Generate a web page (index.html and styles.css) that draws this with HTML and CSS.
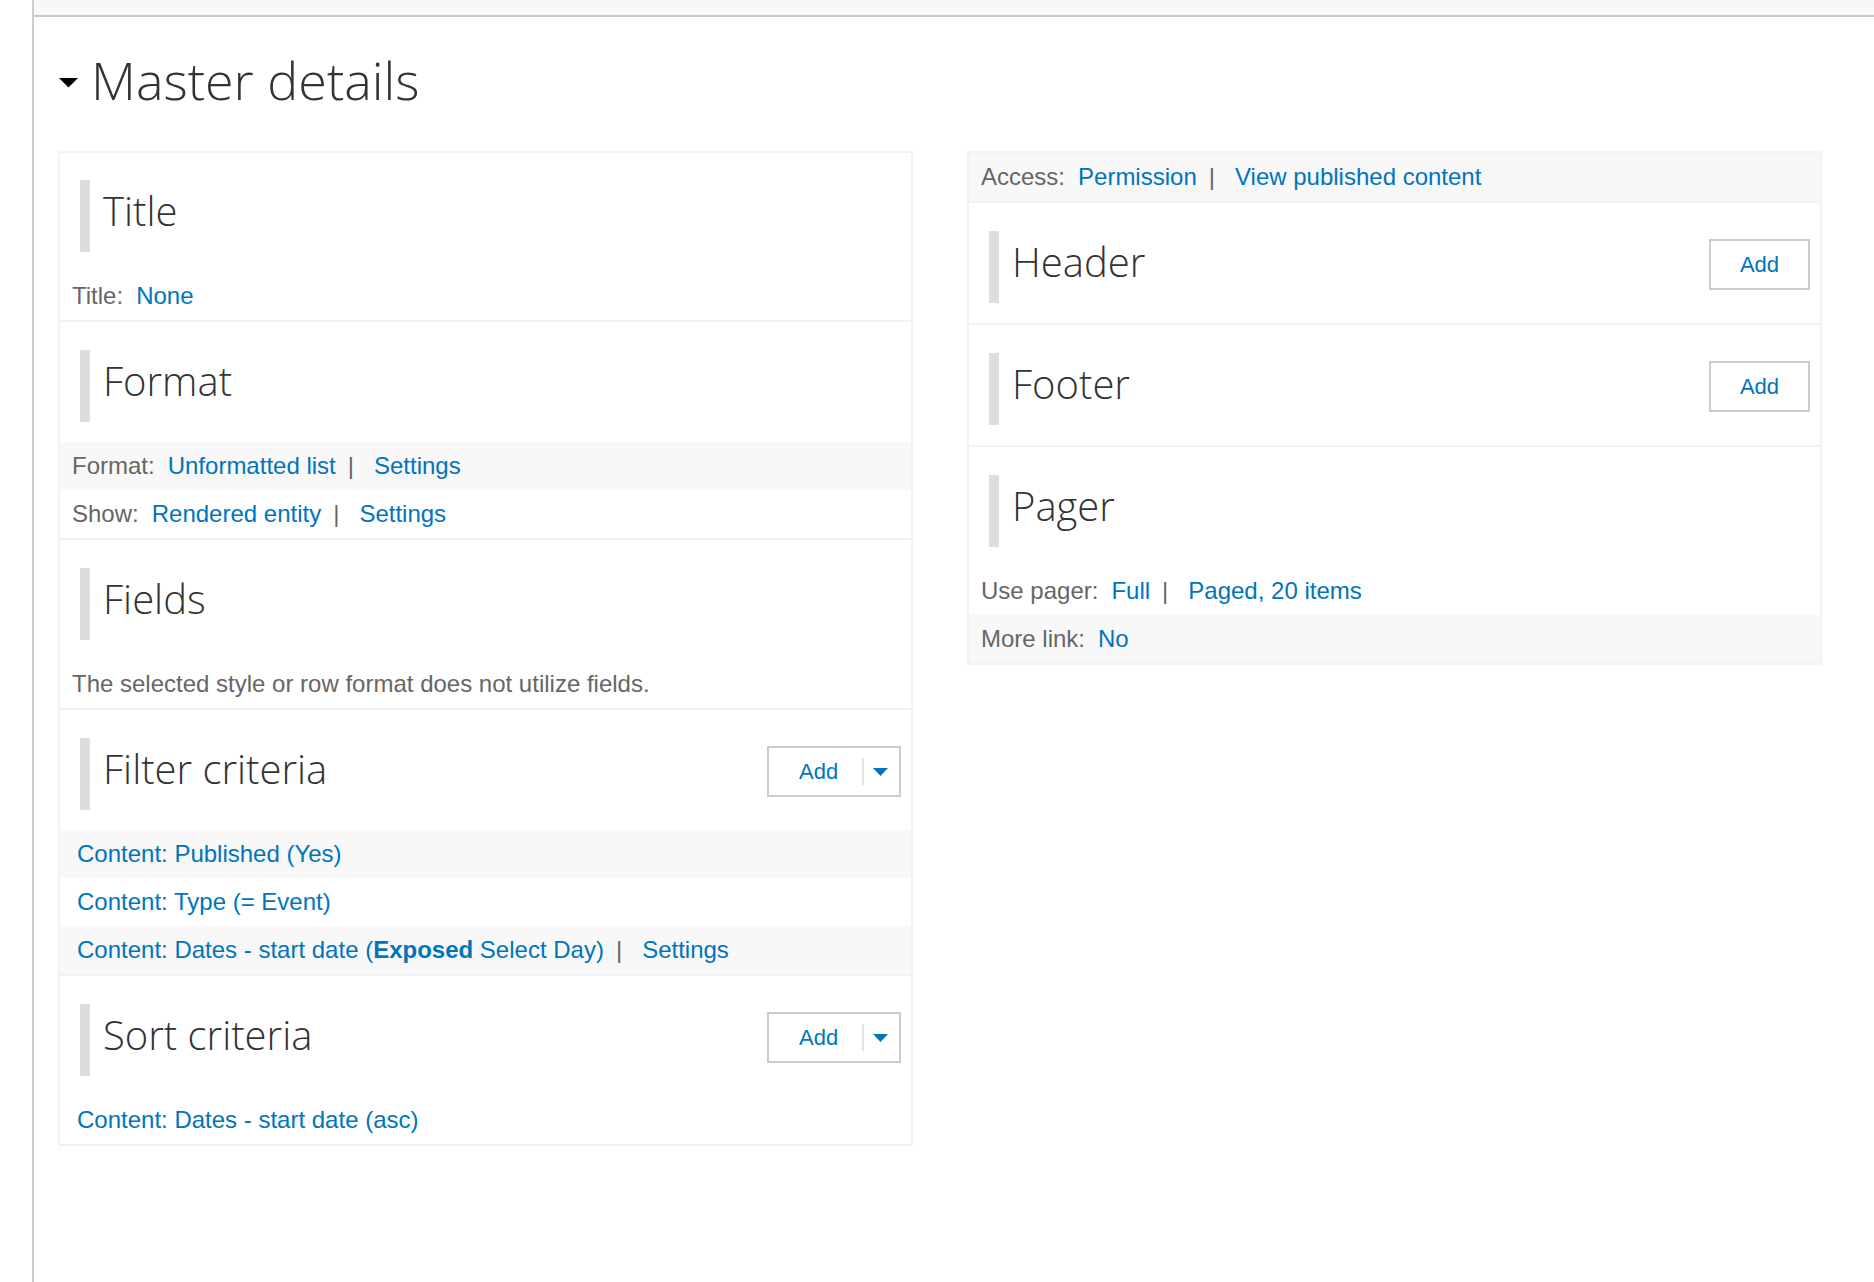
FILE: index.html
```html
<!DOCTYPE html>
<html lang="en">
<head>
<meta charset="utf-8">
<title>Master details</title>
<link rel="stylesheet" href="styles.css">
</head>
<body>
<div class="frame">
  <div class="topbar"></div>
  <div class="content">
    <h1 class="page-title"><svg class="caret" width="19" height="10" viewBox="0 0 19 10"><path d="M0 0H19L9.5 9.5Z" fill="#000"/></svg>Master details</h1>
    <div class="columns">
      <div class="box">
        <section class="section">
          <div class="sec-head"><h2 class="sec-title">Title</h2></div>
          <div class="row"><span class="label">Title:</span><a class="link">None</a></div>
        </section>
        <section class="section">
          <div class="sec-head"><h2 class="sec-title">Format</h2></div>
          <div class="row alt"><span class="label">Format:</span><a class="link">Unformatted list</a><span class="sep">|</span><a class="link">Settings</a></div>
          <div class="row"><span class="label">Show:</span><a class="link">Rendered entity</a><span class="sep">|</span><a class="link">Settings</a></div>
        </section>
        <section class="section">
          <div class="sec-head"><h2 class="sec-title">Fields</h2></div>
          <div class="row">The selected style or row format does not utilize fields.</div>
        </section>
        <section class="section">
          <div class="sec-head">
            <h2 class="sec-title">Filter criteria</h2>
            <div class="btn btn-drop"><span class="btn-text">Add</span><span class="btn-div"></span><svg class="btn-arrow" width="15" height="8" viewBox="0 0 15 8"><path d="M0 0H15L7.5 8Z" fill="#0074bd"/></svg></div>
          </div>
          <div class="row item alt"><a class="link">Content: Published (Yes)</a></div>
          <div class="row item"><a class="link">Content: Type (= Event)</a></div>
          <div class="row item alt"><a class="link">Content: Dates - start date (<strong>Exposed</strong> Select Day)</a><span class="sep">|</span><a class="link">Settings</a></div>
        </section>
        <section class="section">
          <div class="sec-head">
            <h2 class="sec-title">Sort criteria</h2>
            <div class="btn btn-drop"><span class="btn-text">Add</span><span class="btn-div"></span><svg class="btn-arrow" width="15" height="8" viewBox="0 0 15 8"><path d="M0 0H15L7.5 8Z" fill="#0074bd"/></svg></div>
          </div>
          <div class="row item"><a class="link">Content: Dates - start date (asc)</a></div>
        </section>
      </div>
      <div class="box">
        <div class="row alt"><span class="label">Access:</span><a class="link">Permission</a><span class="sep">|</span><a class="link">View published content</a></div>
        <section class="section">
          <div class="sec-head">
            <h2 class="sec-title">Header</h2>
            <div class="btn btn-simple">Add</div>
          </div>
        </section>
        <section class="section">
          <div class="sec-head">
            <h2 class="sec-title">Footer</h2>
            <div class="btn btn-simple">Add</div>
          </div>
        </section>
        <section class="section">
          <div class="sec-head"><h2 class="sec-title">Pager</h2></div>
          <div class="row"><span class="label">Use pager:</span><a class="link">Full</a><span class="sep">|</span><a class="link">Paged, 20 items</a></div>
          <div class="row alt"><span class="label">More link:</span><a class="link">No</a></div>
        </section>
      </div>
    </div>
  </div>
</div>
</body>
</html>
```

FILE: styles.css
```css
html, body {
  margin: 0;
  padding: 0;
  background: #fff;
}

body {
  font-family: "Liberation Sans", Arial, Helvetica, sans-serif;
  font-size: 24px;
  color: #666;
}

.frame {
  margin-left: 32px;
  border-left: 2px solid #ccc;
  min-height: 1282px;
  box-sizing: border-box;
}

.topbar {
  height: 15px;
  background: #f8f8f8;
  border-bottom: 2px solid #c8c8c8;
}

.content {
  padding: 0 52px 0 24px;
}

.page-title {
  margin: 27px 0 0;
  height: 72px;
  display: flex;
  align-items: center;
  font-family: "Open Sans", sans-serif;
  font-weight: 300;
  font-size: 52px;
  line-height: 72px;
  color: #333;
}

.caret {
  margin: 5px 13px 0 1px;
  flex: none;
}

.columns {
  display: grid;
  grid-template-columns: 1fr 1fr;
  column-gap: 54px;
  align-items: start;
  margin-top: 35px;
}

.box {
  border: 2px solid #f2f2f2;
  background: #fff;
}

.section + .section,
.row + .section {
  border-top: 2px solid #f2f2f2;
}

.sec-head {
  display: flex;
  align-items: flex-start;
  padding: 28px 10px 20px 20px;
}

.section:first-child .sec-head {
  padding-top: 27px;
}

.sec-title {
  flex: 1;
  margin: 0;
  height: 72px;
  box-sizing: border-box;
  border-left: 10px solid #ddd;
  padding: 0 0 11px 13px;
  font-family: "Open Sans", sans-serif;
  font-weight: 300;
  font-size: 40px;
  line-height: 61px;
  color: #333;
}

.row {
  height: 48px;
  line-height: 48px;
  padding: 0 12px;
  white-space: nowrap;
  color: #666;
}

.row.item {
  padding-left: 17px;
}

.row.alt {
  background: #f8f8f8;
}

.label {
  margin-right: 13px;
}

.link {
  color: #0074bd;
  text-decoration: none;
}

.link strong {
  font-weight: 700;
}

.sep {
  color: #666;
  margin: 0 20px 0 12px;
}

.btn {
  flex: none;
  box-sizing: border-box;
  height: 51px;
  margin-top: 8px;
  border: 2px solid #ccc;
  background: #fff;
  color: #0074bd;
  font-size: 22px;
  display: flex;
  align-items: center;
}

.btn-simple {
  width: 101px;
  justify-content: center;
}

.btn-drop {
  width: 134px;
}

.btn-text {
  padding-left: 30px;
  padding-right: 24px;
}

.btn-div {
  width: 2px;
  height: 27px;
  background: #e4e4e4;
}

.btn-arrow {
  margin-left: 9px;
  flex: none;
}
```
